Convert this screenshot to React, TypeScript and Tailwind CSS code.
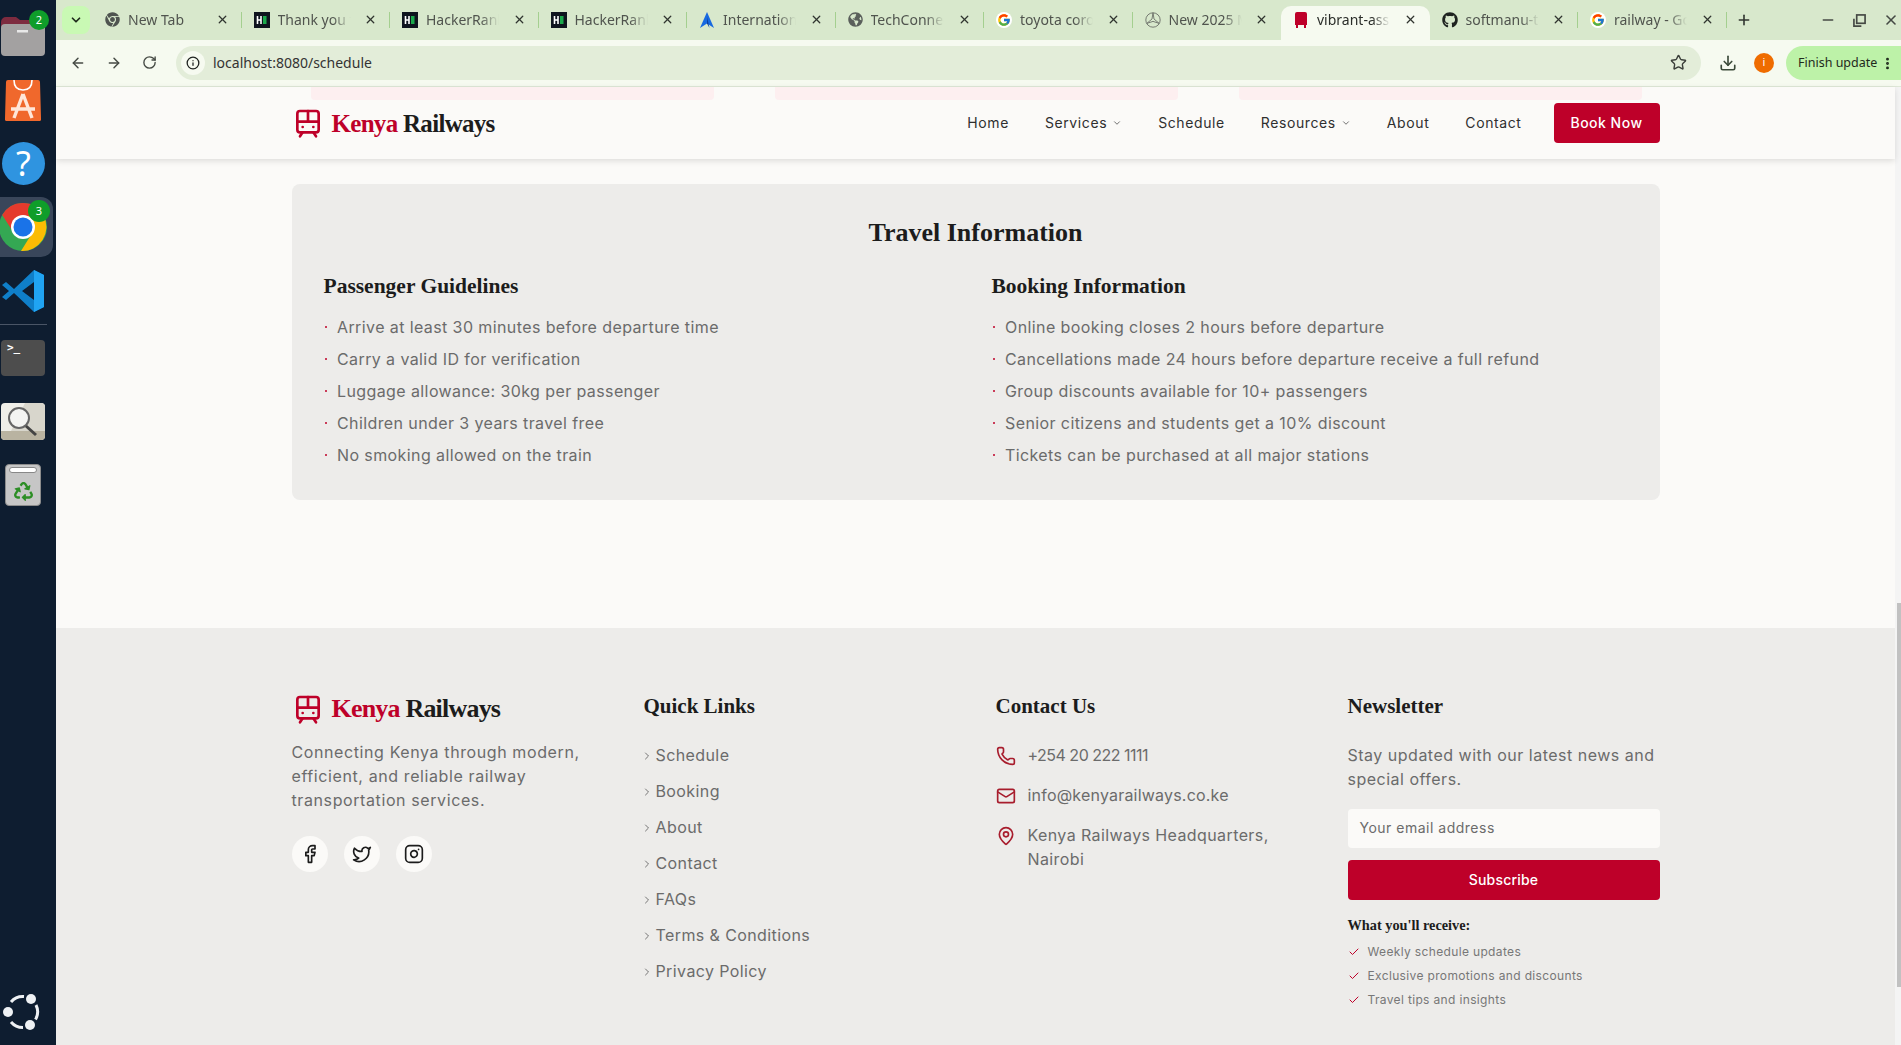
import {
  ArrowLeft,
  ArrowRight,
  Check,
  ChevronDown,
  ChevronRight,
  Download,
  EllipsisVertical,
  Facebook,
  Info,
  Instagram,
  Mail,
  MapPin,
  Minus,
  Phone,
  Plus,
  RotateCw,
  Star,
  TramFront,
  Twitter,
  X,
} from "lucide-react";
import type { ReactNode } from "react";
import { FaChrome, FaGithub, FaGlobeAmericas, FaRecycle } from "react-icons/fa";
import { FcGoogle } from "react-icons/fc";

const sans = "font-['Inter','Liberation_Sans',sans-serif]";
const serif = "font-['Liberation_Serif',serif]";

// ── tab favicons ──────────────────────────────────────────
const HackerRank = () => (
  <svg viewBox="0 0 16 16" className="h-4 w-4 shrink-0">
    <rect width="16" height="16" fill="#0e141e" />
    <path d="M3.5 4v8M7 4v8M3.5 8H7" stroke="#fff" strokeWidth="1.6" fill="none" />
    <rect x="9" y="4" width="3.5" height="8" fill="#1ba94c" />
  </svg>
);

const Mercedes = () => (
  <svg viewBox="0 0 16 16" className="h-4 w-4 shrink-0" fill="none" stroke="#6b6f68" strokeWidth="0.9">
    <circle cx="8" cy="8" r="7.2" />
    <path d="M8 .8 9 7l5.2 4.4L8 9.4l-6.2 2L7 7Z" />
  </svg>
);

const Arrow = () => (
  <svg viewBox="0 0 16 16" className="h-4 w-4 shrink-0">
    <path d="M8 0 15 16 8 11.5 1 16Z" fill="#1769e0" />
    <path d="M8 5 10.5 16 8 11.5Z" fill="#0b3f9e" />
  </svg>
);

const Google = () => (
  <span className="flex h-4 w-4 shrink-0 items-center justify-center rounded-full bg-white">
    <FcGoogle size={14} />
  </span>
);

const tabs: { title: string; icon: ReactNode; active?: boolean; sep?: boolean }[] = [
  { title: "New Tab", icon: <FaChrome size={15} color="#4f5450" />, sep: true },
  { title: "Thank you for", icon: <HackerRank />, sep: true },
  { title: "HackerRank", icon: <HackerRank />, sep: true },
  { title: "HackerRank", icon: <HackerRank />, sep: true },
  { title: "International", icon: <Arrow />, sep: true },
  { title: "TechConnect", icon: <FaGlobeAmericas size={15} color="#5a5f5b" />, sep: true },
  { title: "toyota corolla", icon: <Google />, sep: true },
  { title: "New 2025 Mer", icon: <Mercedes /> },
  {
    title: "vibrant-asset",
    active: true,
    icon: (
      <svg viewBox="0 0 16 16" className="h-4 w-4 shrink-0">
        <path d="M2 2a2 2 0 0 1 2-2h8a2 2 0 0 1 2 2v11H2ZM3 13h2v3H3ZM11 13h2v3h-2Z" fill="#be0029" />
      </svg>
    ),
  },
  { title: "softmanu-train", icon: <FaGithub size={16} color="#1f2320" />, sep: true },
  { title: "railway - Goog", icon: <Google />, sep: true },
];

function Tab({ title, icon, active, sep }: { title: string; icon: ReactNode; active?: boolean; sep?: boolean }) {
  return (
    <div
      className={`relative flex h-[34px] w-[148.5px] shrink-0 items-center pb-[7px] pl-3 pr-[13px] ${
        active ? "rounded-t-[10px] bg-[#f6faf0] text-[#2a2d29]" : "text-[#50544e]"
      }`}
    >
      {icon}
      <span className="ml-[8px] w-[73px] overflow-hidden whitespace-nowrap text-[14px] [mask-image:linear-gradient(to_right,black_75%,transparent)]">
        {title}
      </span>
      <X size={13} strokeWidth={2.4} className="ml-auto text-[#30342f]" />
      {sep && <span className="absolute right-0 top-[6px] h-4 w-px bg-[#a4cf8f]" />}
    </div>
  );
}

function BrowserChrome() {
  return (
    <div className="shrink-0 font-['Noto_Sans',sans-serif]">
      {/* tab strip */}
      <div className="flex h-10 items-end bg-[#d8e8cc]">
        <div className="mb-[6px] ml-[6px] mr-[3px] flex h-7 w-7 items-center justify-center rounded-lg bg-[#c9f9b4]">
          <ChevronDown size={14} strokeWidth={3} className="text-[#1f2a1c]" />
        </div>
        {tabs.map((t, i) => (
          <Tab key={i} {...t} />
        ))}
        <Plus size={16} strokeWidth={2.4} className="mb-[12px] ml-[9px] text-[#30342f]" />
        <div className="mb-[12px] ml-auto flex items-center gap-[17px] pr-[2px] text-[#454944]">
          <Minus size={16} strokeWidth={2.4} />
          <svg viewBox="0 0 14 14" className="h-[13px] w-[13px]" fill="none" stroke="currentColor" strokeWidth="1.8">
            <rect x="4" y="1" width="9" height="9" />
            <path d="M1 5v8h8" />
          </svg>
          <X size={16} strokeWidth={2.4} />
        </div>
      </div>
      {/* toolbar */}
      <div className="flex h-[47px] items-center border-b border-[#dfe8d8] bg-[#f6faf0] pb-px">
        <div className="flex w-[120px] items-center gap-[20px] pl-[14px] text-[#454a44]">
          <ArrowLeft size={16} strokeWidth={2.2} />
          <ArrowRight size={16} strokeWidth={2.2} />
          <RotateCw size={15} strokeWidth={2.2} />
        </div>
        <div className="flex h-[34px] w-[1525px] items-center rounded-full bg-[#e3edd9] pl-[5px] pr-[14px]">
          <span className="flex h-6 w-6 items-center justify-center rounded-full bg-[#f6faf0]">
            <Info size={14} strokeWidth={2.2} className="text-[#1f2320]" />
          </span>
          <span className="ml-[8px] text-[14px] text-[#333]">localhost:8080/schedule</span>
          <Star size={17} strokeWidth={2} className="ml-auto text-[#3b3f3a]" />
        </div>
        <Download size={18} strokeWidth={2.2} className="ml-[18px] text-[#3b4a39]" />
        <span className="ml-[17px] flex h-5 w-5 items-center justify-center rounded-full bg-[#ef6c00] text-[11px] text-white">
          i
        </span>
        <div className="ml-[12px] flex h-[34px] w-[115px] items-center rounded-l-full bg-[#bdf2a8] pl-[12px] pt-px text-[12.5px] text-[#1f2a1c]">
          Finish update
          <EllipsisVertical size={15} strokeWidth={2.6} className="ml-[3px]" />
        </div>
      </div>
    </div>
  );
}

// ── ubuntu dock ───────────────────────────────────────────
const Badge = ({ n, className }: { n: number; className: string }) => (
  <span
    className={`absolute flex items-center justify-center rounded-full bg-[#0f9d2a] font-['Noto_Sans',sans-serif] text-[11px] text-white ${className}`}
  >
    {n}
  </span>
);

function Dock() {
  return (
    <aside className="flex h-full w-14 shrink-0 flex-col bg-[#0e1d30]">
      <div className="relative h-[56px] pl-px pt-4">
        <svg viewBox="0 0 44 40" className="h-10 w-11">
          <path d="M0 6a5 5 0 0 1 5-5h10l4 3h20a5 5 0 0 1 5 5v6H0Z" fill="#7d2b3f" />
          <rect y="8" width="44" height="32" rx="4" fill="#a3a1a1" />
          <rect x="16" y="14" width="11" height="2.5" fill="#e8e8e8" />
        </svg>
        <Badge n={2} className="left-[29px] top-[10px] h-5 w-5" />
      </div>
      <div className="mt-[23px] pl-[5px]">
        <svg viewBox="0 0 36 42" className="h-[42px] w-9">
          <path d="M1 3a2 2 0 0 1 2-2h30a2 2 0 0 1 2 2l1 36a2 2 0 0 1-2 3H2a2 2 0 0 1-2-3Z" fill="#f0682c" />
          <path d="M9 1c0 7 4 10 9 10s9-3 9-10" fill="none" stroke="#fff" strokeWidth="1.6" />
          <path d="M18 15 9 39M18 15l9 24M6 30h24" fill="none" stroke="#ffe6d8" strokeWidth="3.4" />
        </svg>
      </div>
      <div className="ml-[2px] mt-[21px] flex h-[43px] w-[43px] items-center justify-center self-start rounded-full bg-[#2f94e0] pb-px font-['Noto_Sans',sans-serif] text-[34px] text-white">
        ?
      </div>
      <div className="relative mt-[12px] h-[60px] w-[53px] rounded-r-xl bg-[#39465a]">
        <svg viewBox="0 0 48 48" className="absolute left-[-1px] top-[6px] h-12 w-12">
          <circle cx="24" cy="24" r="24" fill="#34a853" />
          <path d="M24 13H44.78A24 24 0 0 1 22 47.9L33.5 29.5Z" fill="#fbbc04" />
          <path d="M3.2 12A24 24 0 0 1 44.78 12V13H24A11 11 0 0 0 14.5 29.5Z" fill="#e53a2d" />
          <circle cx="24" cy="24" r="12" fill="#fff" />
          <circle cx="24" cy="24" r="9.5" fill="#1a73e8" />
        </svg>
        <Badge n={3} className="left-[28px] top-[3px] h-[22px] w-[22px]" />
      </div>
      <div className="mt-[13px] pl-[2px]">
        <svg viewBox="0 0 42 42" className="h-[42px] w-[42px]">
          <path d="M32 0 42 5V37L32 42 12 23 4 30 0 27 7 21 0 15 4 12 12 19ZM32 12 20 21 32 30Z" fill="#0f7fc9" fillRule="evenodd" />
          <path d="M32 0 42 5V37L32 42Z" fill="#20a4f3" />
        </svg>
      </div>
      <div className="mt-[12px] h-px w-[47px] bg-[#4a5566]" />
      <div className="mt-[15px] pl-px">
        <div className="h-9 w-11 rounded-[4px] bg-[#4d4d4d] pl-[6px] pt-[1px] font-['DejaVu_Sans_Mono',monospace] text-[11px] font-bold leading-[14px] text-white">
          &gt;_
        </div>
      </div>
      <div className="mt-[27px] pl-px">
        <svg viewBox="0 0 44 37" className="h-[37px] w-11">
          <rect width="44" height="37" rx="4" fill="#efeee8" />
          <path d="M24 0h16a4 4 0 0 1 4 4v24H10Z" fill="#d8d6cc" />
          <path d="M0 28h44v5a4 4 0 0 1-4 4H4a4 4 0 0 1-4-4Z" fill="#b9b3a1" />
          <circle cx="18" cy="15" r="10" fill="#f4f4f2" stroke="#666" strokeWidth="2" />
          <path d="M25 23 35 32" stroke="#444" strokeWidth="3" />
        </svg>
      </div>
      <div className="relative ml-[5px] mt-[24px] flex h-[42px] w-9 items-end justify-center rounded-[4px] border border-[#8c8c8c] bg-[#c6c6c6] pb-[4px]">
        <span className="absolute left-[3px] right-[3px] top-[2px] h-[6px] rounded-sm border border-[#888] bg-white" />
        <FaRecycle size={19} color="#2c8e25" />
      </div>
      <div className="mb-[13px] mt-auto pl-[2px]">
        <svg viewBox="0 0 40 40" className="h-10 w-10" fill="none" stroke="#eef1f4" strokeWidth="3">
          <path d="M9 10A15.5 15.5 0 0 1 22 4.6" />
          <path d="M34 13A15.5 15.5 0 0 1 33.5 27.5" />
          <path d="M9 30A15.5 15.5 0 0 0 21 35.5" />
          <circle cx="29" cy="7" r="5" fill="#eef1f4" stroke="none" />
          <circle cx="6" cy="20" r="5" fill="#eef1f4" stroke="none" />
          <circle cx="28" cy="33" r="5" fill="#eef1f4" stroke="none" />
        </svg>
      </div>
    </aside>
  );
}

// ── site ──────────────────────────────────────────────────
function Logo({ className }: { className: string }) {
  return (
    <div className="flex items-center gap-2">
      <TramFront size={32} strokeWidth={2} className="text-[#be0029]" />
      <span className={`${serif} pt-px font-bold leading-8 ${className}`}>
        <span className="text-[#be0029]">Kenya</span> <span className="text-[#1c1c1c]">Railways</span>
      </span>
    </div>
  );
}

function Header() {
  const links: [string, boolean][] = [
    ["Home", false],
    ["Services", true],
    ["Schedule", false],
    ["Resources", true],
    ["About", false],
    ["Contact", false],
  ];
  return (
    <header className="relative z-10 h-[72px] shrink-0 bg-[#fbfaf8] shadow-[0_2px_6px_rgba(0,0,0,0.12)]">
      <div className="absolute left-[255px] top-0 grid w-[1331px] grid-cols-3 gap-[61px]">
        <div className="h-[13px] rounded-b bg-[#fdeff0]" />
        <div className="h-[13px] rounded-b bg-[#fdeff0]" />
        <div className="h-[13px] rounded-b bg-[#fdeff0]" />
      </div>
      <div className="relative mx-auto flex h-full w-[1368px] items-center justify-between">
        <Logo className="text-[25px] tracking-[-0.7px]" />
        <nav className={`${sans} flex items-center gap-9 pb-[2px] text-[14px] text-[#2f2f2f]`}>
          {links.map(([label, chevron]) => (
            <span key={label} className="flex items-center gap-[5px] tracking-[0.6px]">
              {label}
              {chevron && <ChevronDown size={10} strokeWidth={2} className="mt-px text-[#555]" />}
            </span>
          ))}
          <button className="-ml-[4px] mt-[2px] h-10 w-[106px] rounded bg-[#be0029] pb-[2px] text-[14px] font-medium tracking-[0.5px] text-[#fff]">
            Book Now
          </button>
        </nav>
      </div>
    </header>
  );
}

const guidelines = [
  "Arrive at least 30 minutes before departure time",
  "Carry a valid ID for verification",
  "Luggage allowance: 30kg per passenger",
  "Children under 3 years travel free",
  "No smoking allowed on the train",
];

const booking = [
  "Online booking closes 2 hours before departure",
  "Cancellations made 24 hours before departure receive a full refund",
  "Group discounts available for 10+ passengers",
  "Senior citizens and students get a 10% discount",
  "Tickets can be purchased at all major stations",
];

function InfoColumn({ title, items }: { title: string; items: string[] }) {
  return (
    <div>
      <h3 className={`${serif} mb-[15px] text-[21.5px] font-bold leading-7 text-[#1c1c1c]`}>{title}</h3>
      <ul className="flex flex-col gap-2">
        {items.map((item) => (
          <li key={item} className={`${sans} flex h-6 items-center text-[16px] tracking-[0.4px] text-[#6b6b6b]`}>
            <span className="ml-px mr-[10px] h-[2.5px] w-[2.5px] rounded-full bg-[#be0029]" />
            {item}
          </li>
        ))}
      </ul>
    </div>
  );
}

function TravelInfo() {
  return (
    <section className="mx-auto mb-[128px] mt-[25px] h-[316px] w-[1368px] rounded-lg bg-[#edecea] px-[32px] pt-[33px]">
      <h2 className={`${serif} mb-[23px] text-center text-[26px] font-bold leading-8 text-[#1c1c1c]`}>
        Travel Information
      </h2>
      <div className="grid grid-cols-2 gap-8">
        <InfoColumn title="Passenger Guidelines" items={guidelines} />
        <InfoColumn title="Booking Information" items={booking} />
      </div>
    </section>
  );
}

const quickLinks = ["Schedule", "Booking", "About", "Contact", "FAQs", "Terms & Conditions", "Privacy Policy"];

const perks = ["Weekly schedule updates", "Exclusive promotions and discounts", "Travel tips and insights"];

const FooterHeading = ({ children }: { children: ReactNode }) => (
  <h4 className={`${serif} mb-[23px] text-[21px] font-bold leading-7 text-[#1c1c1c]`}>{children}</h4>
);

function Footer() {
  const body = `${sans} text-[16px] text-[#6b6b6b]`;
  return (
    <footer className="flex-1 bg-[#edecea] pt-16">
      <div className="mx-auto grid w-[1368px] grid-cols-4 gap-10">
        <div>
          <Logo className="text-[26px] tracking-[-0.8px]" />
          <p className={`${body} mt-[15px] leading-6 tracking-[0.6px]`}>
            Connecting Kenya through modern, efficient, and reliable railway transportation services.
          </p>
          <div className="mt-6 flex gap-4 text-[#1c1c1c]">
            <span className="flex h-9 w-9 items-center justify-center rounded-full bg-[#fbfaf8]">
              <Facebook size={20} />
            </span>
            <span className="flex h-9 w-9 items-center justify-center rounded-full bg-[#fbfaf8]">
              <Twitter size={20} />
            </span>
            <span className="flex h-9 w-9 items-center justify-center rounded-full bg-[#fbfaf8]">
              <Instagram size={20} />
            </span>
          </div>
        </div>

        <div>
          <FooterHeading>Quick Links</FooterHeading>
          <ul className="flex flex-col gap-3">
            {quickLinks.map((l) => (
              <li key={l} className={`${body} flex h-6 items-center tracking-[0.4px]`}>
                <ChevronRight size={12} strokeWidth={1.6} className="-ml-[3px] mr-[3px] mt-[2px] text-[#555]" />
                {l}
              </li>
            ))}
          </ul>
        </div>

        <div>
          <FooterHeading>Contact Us</FooterHeading>
          <ul className="flex flex-col gap-4">
            <li className={`${body} flex gap-3 tracking-[-0.5px]`}>
              <Phone size={20} className="mt-[3px] shrink-0 text-[#a81d2d]" />
              <span>+254 20 222 1111</span>
            </li>
            <li className={`${body} flex gap-3 tracking-[0.2px]`}>
              <Mail size={20} className="mt-[3px] shrink-0 text-[#a81d2d]" />
              <span>info@kenyarailways.co.ke</span>
            </li>
            <li className={`${body} flex gap-3 leading-6 tracking-[0.4px]`}>
              <MapPin size={20} className="mt-[3px] shrink-0 text-[#a81d2d]" />
              <span>
                Kenya Railways Headquarters,
                <br />
                Nairobi
              </span>
            </li>
          </ul>
        </div>

        <div>
          <FooterHeading>Newsletter</FooterHeading>
          <p className={`${body} leading-6 tracking-[0.5px]`}>Stay updated with our latest news and special offers.</p>
          <div className={`${sans} mt-[18px] flex h-[39px] items-center rounded bg-[#fbfaf8] pb-[2px] pl-3 text-[14px] tracking-[0.5px] text-[#6b6b6b]`}>
            Your email address
          </div>
          <button className={`${sans} mt-3 h-10 w-full rounded bg-[#be0029] pb-[2px] text-[14px] font-medium tracking-[0.2px] text-white`}>
            Subscribe
          </button>
          <h5 className={`${serif} mb-2 mt-[14px] text-[14.3px] font-bold leading-[22px] text-[#1c1c1c]`}>
            What you'll receive:
          </h5>
          <ul className="flex flex-col gap-2">
            {perks.map((p) => (
              <li key={p} className={`${sans} flex h-4 items-center gap-[8px] text-[12px] tracking-[0.35px] text-[#777]`}>
                <Check size={12} strokeWidth={2} className="text-[#be0029]" />
                {p}
              </li>
            ))}
          </ul>
        </div>
      </div>
    </footer>
  );
}

export default function App() {
  return (
    <div className="flex h-[1045px] w-[1901px] overflow-hidden bg-[#fbfaf8]">
      <Dock />
      <div className="flex min-w-0 flex-1 flex-col">
        <BrowserChrome />
        <div className="flex min-h-0 flex-1">
          <main className="flex min-w-0 flex-1 flex-col">
            <Header />
            <TravelInfo />
            <Footer />
          </main>
          {/* page scrollbar */}
          <div className="w-[6px] shrink-0 bg-[#f4f4f4] pl-[2px] pt-[516px]">
            <div className="h-[384px] w-1 bg-[#c1c1c1]" />
          </div>
        </div>
      </div>
    </div>
  );
}
